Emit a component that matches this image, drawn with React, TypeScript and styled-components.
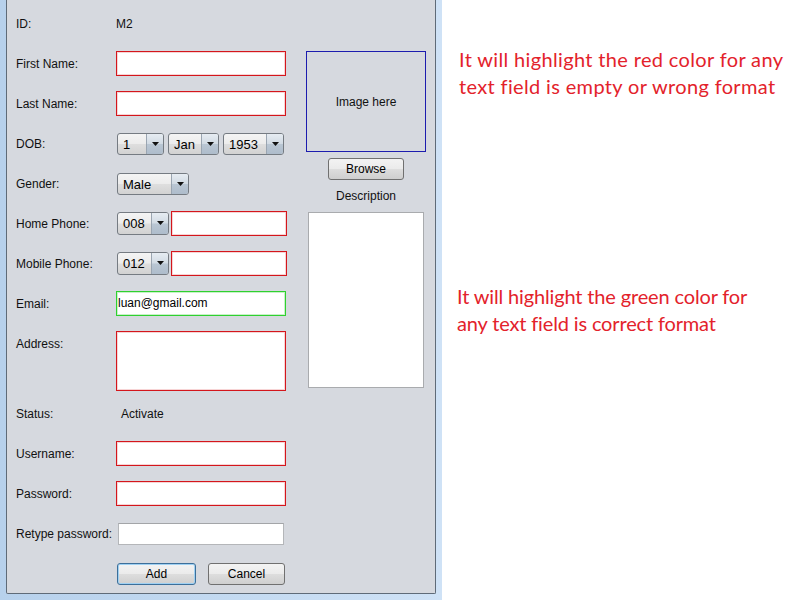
import React from "react";
import styled, { createGlobalStyle, css } from "styled-components";

const Global = createGlobalStyle`
  html, body { margin: 0; padding: 0; background: #ffffff; }
  body { width: 800px; height: 600px; overflow: hidden; font-family: "Liberation Sans", Arial, sans-serif; }
`;

const Page = styled.div`
  display: flex;
  width: 800px;
  height: 600px;
`;

const Frame = styled.div`
  width: 442px;
  height: 600px;
  box-sizing: border-box;
  padding: 0 6px 6px 6px;
  background: linear-gradient(90deg, #b7d1ec 0%, #cfe2f6 100%);
  display: flex;
`;

const Panel = styled.div`
  flex: 1;
  box-sizing: border-box;
  background: #d6d9df;
  border: 1px solid #5f6b78;
  border-top: none;
  border-radius: 0 0 2px 2px;
  padding-left: 9px;
  display: flex;
  font-size: 12px;
  color: #111;
`;

const FormColumn = styled.div`
  width: 290px;
  padding-top: 3px;
  display: flex;
  flex-direction: column;
`;

const Row = styled.div<{ $h?: number; $top?: boolean }>`
  display: flex;
  align-items: ${(p) => (p.$top ? "flex-start" : "center")};
  height: ${(p) => p.$h ?? 40}px;
  padding-top: ${(p) => (p.$top ? 8 : 0)}px;
  box-sizing: border-box;
`;

const Label = styled.div<{ $pt?: number }>`
  width: 100px;
  flex: none;
  white-space: nowrap;
  padding-top: ${(p) => p.$pt ?? 2}px;
`;

const Value = styled.div<{ $ml?: number }>`
  margin-left: ${(p) => p.$ml ?? 0}px;
  padding-top: 2px;
`;

const Field = styled.div<{
  $state?: "error" | "ok" | "plain";
  $w?: number;
  $h?: number;
  $ml?: number;
  $mt?: number;
}>`
  width: ${(p) => p.$w ?? 170}px;
  height: ${(p) => p.$h ?? 25}px;
  margin-left: ${(p) => p.$ml ?? 0}px;
  margin-top: ${(p) => p.$mt ?? 0}px;
  box-sizing: border-box;
  background: #fff;
  display: flex;
  align-items: center;
  padding-left: 1px;
  font-size: 12px;
  color: #000;
  ${(p) =>
    p.$state === "ok"
      ? css`
          border: 1px solid #2fd02f;
          box-shadow: inset 0 0 0 1px #c8f2c8;
        `
      : p.$state === "plain"
      ? css`
          border: 1px solid #b4b6b9;
          border-top-color: #a3a5a8;
        `
      : css`
          border: 1px solid #d4161c;
          box-shadow: inset 0 0 0 1px #f7d4d5;
        `}
`;

const Area = styled(Field)`
  align-items: flex-start;
`;

const ComboBox = styled.div<{ $w: number; $h?: number; $ml?: number; $mt?: number }>`
  width: ${(p) => p.$w}px;
  height: ${(p) => p.$h ?? 22}px;
  margin-left: ${(p) => p.$ml ?? 0}px;
  margin-top: ${(p) => p.$mt ?? 2}px;
  box-sizing: border-box;
  display: flex;
  border: 1px solid #757b82;
  border-radius: 3px;
  overflow: hidden;
  background: linear-gradient(#f4f4f4 0%, #ececec 48%, #dedede 52%, #d2d2d2 100%);
  flex: none;
`;

const ComboText = styled.div`
  flex: 1;
  display: flex;
  align-items: center;
  padding-left: 5px;
  font-size: 13px;
  color: #000;
`;

const ComboArrow = styled.div`
  width: 16px;
  border-left: 1px solid #9aa5b1;
  background: linear-gradient(#e6ecf2 0%, #d2dbe4 48%, #b9c6d3 52%, #aebccb 100%);
  display: flex;
  align-items: center;
  justify-content: center;
`;

const Gap = styled.div<{ $w: number }>`
  width: ${(p) => p.$w}px;
  flex: none;
`;

const Button = styled.div<{ $w: number; $focus?: boolean; $ml?: number; $mt?: number }>`
  width: ${(p) => p.$w}px;
  height: 22px;
  margin-left: ${(p) => p.$ml ?? 0}px;
  margin-top: ${(p) => p.$mt ?? 0}px;
  box-sizing: border-box;
  border: 1px solid #707070;
  border-radius: 3px;
  background: linear-gradient(#f3f3f3 0%, #ebebeb 48%, #dddddd 52%, #cfcfcf 100%);
  display: flex;
  align-items: center;
  justify-content: center;
  font-size: 12px;
  color: #000;
  flex: none;
  ${(p) =>
    p.$focus &&
    css`
      border-color: #3c6f9a;
      box-shadow: inset 0 0 0 1px #9fd0f2;
    `}
`;

const SideColumn = styled.div`
  width: 120px;
  padding-top: 51px;
  display: flex;
  flex-direction: column;
  align-items: center;
`;

const ImageBox = styled.div`
  width: 120px;
  height: 101px;
  box-sizing: border-box;
  border: 1px solid #1c1cae;
  display: flex;
  align-items: center;
  justify-content: center;
  font-size: 12px;
`;

const Caption = styled.div`
  margin-top: 9px;
  height: 14px;
  line-height: 14px;
  font-size: 12px;
`;

const DescArea = styled.div`
  margin-top: 9px;
  width: 116px;
  height: 176px;
  box-sizing: border-box;
  background: #fff;
  border: 1px solid #a9abae;
`;

const Notes = styled.div`
  flex: 1;
  display: flex;
  flex-direction: column;
  padding-top: 46px;
`;

const Note = styled.p<{ $ml: number; $mt?: number; $ls?: number }>`
  margin: ${(p) => p.$mt ?? 0}px 0 0 ${(p) => p.$ml}px;
  font-family: Lato, "Open Sans", sans-serif;
  font-size: 20px;
  letter-spacing: ${(p) => p.$ls ?? 0.35}px;
  line-height: 27px;
  white-space: nowrap;
  color: #e3222b;
`;

const Arrow = () => (
  <svg width="7" height="4" viewBox="0 0 7 4">
    <path d="M0 0H7L3.5 4Z" fill="#111" />
  </svg>
);

const Combo = ({
  w,
  h,
  ml,
  mt,
  text,
}: {
  w: number;
  h?: number;
  ml?: number;
  mt?: number;
  text: string;
}) => (
  <ComboBox $w={w} $h={h} $ml={ml} $mt={mt}>
    <ComboText>{text}</ComboText>
    <ComboArrow>
      <Arrow />
    </ComboArrow>
  </ComboBox>
);

export default function App() {
  return (
    <Page>
      <Global />
      <Frame>
        <Panel>
          <FormColumn>
            <Row>
              <Label>ID:</Label>
              <Value>M2</Value>
            </Row>
            <Row>
              <Label>First Name:</Label>
              <Field $state="error" />
            </Row>
            <Row>
              <Label>Last Name:</Label>
              <Field $state="error" />
            </Row>
            <Row>
              <Label>DOB:</Label>
              <Combo w={47} ml={1} text="1" />
              <Gap $w={4} />
              <Combo w={51} text="Jan" />
              <Gap $w={4} />
              <Combo w={61} text="1953" />
            </Row>
            <Row>
              <Label>Gender:</Label>
              <Combo w={72} ml={1} text="Male" />
            </Row>
            <Row>
              <Label>Home Phone:</Label>
              <Combo w={52} ml={1} h={23} mt={0} text="008" />
              <Gap $w={2} />
              <Field $state="error" $w={116} />
            </Row>
            <Row>
              <Label>Mobile Phone:</Label>
              <Combo w={52} ml={1} h={23} mt={0} text="012" />
              <Gap $w={2} />
              <Field $state="error" $w={116} />
            </Row>
            <Row>
              <Label>Email:</Label>
              <Field $state="ok">luan@gmail.com</Field>
            </Row>
            <Row $h={70} $top>
              <Label $pt={6}>Address:</Label>
              <Area $state="error" $h={60} />
            </Row>
            <Row>
              <Label>Status:</Label>
              <Value $ml={5}>Activate</Value>
            </Row>
            <Row>
              <Label>Username:</Label>
              <Field $state="error" />
            </Row>
            <Row>
              <Label>Password:</Label>
              <Field $state="error" />
            </Row>
            <Row>
              <Label>Retype password:</Label>
              <Field $state="plain" $w={166} $h={22} $ml={2} $mt={2} />
            </Row>
            <Row>
              <Gap $w={101} />
              <Button $w={79} $mt={2} $focus>
                Add
              </Button>
              <Button $w={77} $ml={12} $mt={2}>
                Cancel
              </Button>
            </Row>
          </FormColumn>
          <SideColumn>
            <ImageBox>Image here</ImageBox>
            <Button $w={76} $mt={6}>
              Browse
            </Button>
            <Caption>Description</Caption>
            <DescArea />
          </SideColumn>
        </Panel>
      </Frame>
      <Notes>
        <Note $ml={17}>
          It will highlight the red color for any
          <br />
          text field is empty or wrong format
        </Note>
        <Note $ml={15} $mt={183} $ls={-0.15}>
          It will highlight the green color for
          <br />
          any text field is correct format
        </Note>
      </Notes>
    </Page>
  );
}
